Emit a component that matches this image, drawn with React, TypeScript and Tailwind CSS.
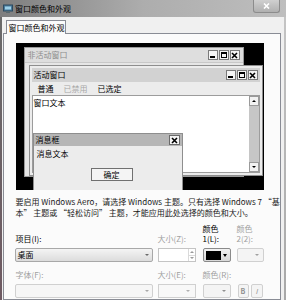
import React from "react";

const F = { fontFamily: '"Noto Sans CJK SC", "Noto Sans", sans-serif' };

function Caps() {
  const b =
    "w-[10px] h-[10px] bg-[#f4f4f4] border border-[#7a7a7a] flex items-center justify-center";
  return (
    <div className="flex gap-[1px]">
      <div className={b}>
        <div className="w-[5px] h-[2px] bg-black mt-[4px]" />
      </div>
      <div className={b}>
        <div className="w-[6px] h-[6px] border border-black border-t-2" />
      </div>
      <div className={b}>
        <svg width="7" height="7" viewBox="0 0 7 7">
          <path d="M1 1L6 6M6 1L1 6" stroke="black" strokeWidth="1.6" />
        </svg>
      </div>
    </div>
  );
}

export default function App() {
  return (
    <div
      className="w-[286px] h-[300px] overflow-hidden flex flex-col bg-[#bdbdbd] text-[8px] leading-[10px] text-black"
      style={F}
    >
      {/* title bar */}
      <div className="h-[17px] relative flex items-center bg-gradient-to-r from-[#7e7e7e] via-[#adadad] to-[#bebebe]">
        <div className="ml-[3px] w-[10px] h-[10px] flex items-center justify-center">
          <svg width="10" height="10" viewBox="0 0 10 10">
            <rect x="0.5" y="1" width="9" height="6" fill="#4a7a9a" stroke="#2c4a60" />
            <rect x="2" y="2.5" width="6" height="3" fill="#9cd0e8" />
            <rect x="3" y="7" width="4" height="2" fill="#5a6a70" />
          </svg>
        </div>
        <span className="ml-[2px] text-[8px] text-black whitespace-nowrap">窗口颜色和外观</span>
        <div className="absolute right-[6px] top-0 w-[27px] h-[13px] rounded-b-[3px] border border-t-0 border-[#8c8c8c] bg-gradient-to-b from-[#d0d0d0] to-[#b0b0b0] flex items-center justify-center">
          <svg width="7" height="6" viewBox="0 0 7 6">
            <path d="M1 0.5L6 5.5M6 0.5L1 5.5" stroke="#ffffff" strokeWidth="1.6" />
          </svg>
        </div>
      </div>

      {/* body */}
      <div className="flex-1 flex">
        <div className="w-[4px] bg-gradient-to-b from-[#6a6a6a] to-[#6e5a62]" />
        <div className="flex-1 bg-[#f0f0f0] flex flex-col pt-[3px] pl-[1px] pr-[3px]">
          {/* tab strip */}
          <div className="h-[13px] flex items-end pl-[3px]">
            <div className="h-[14px] w-[60px] bg-[#fbfbfb] border border-b-0 border-[#898c95] flex items-center pl-[2px] relative top-[1px] whitespace-nowrap">
              窗口颜色和外观
            </div>
          </div>
          {/* panel */}
          <div className="flex-1 bg-[#fbfbfb] border border-[#898c95] pt-[9px]">
            {/* preview */}
            <div className="ml-[12px] w-[248px] h-[147px] bg-black relative overflow-hidden">
              {/* inactive window */}
              <div className="absolute left-[8px] top-[4px] w-[220px] h-[130px] bg-[#e6e6e6] border border-[#9a9a9a]">
                <div className="h-[15px] bg-[#dedede] flex items-center justify-between pl-[3px] pr-[3px] border-b border-[#c8c8c8]">
                  <span className="text-[#8c8c8c]">非活动窗口</span>
                  <Caps />
                </div>
              </div>
              {/* active window */}
              <div className="absolute left-[13px] top-[22px] w-[234px] h-[111px] bg-[#ececec] border border-[#8e8e8e] p-[2px] flex flex-col">
                <div className="h-[14px] bg-[#d2d2d2] flex items-center justify-between pl-[2px] pr-[2px]">
                  <span>活动窗口</span>
                  <Caps />
                </div>
                <div className="h-[13px] flex items-center gap-[10px] pl-[6px]">
                  <span>普通</span>
                  <span className="text-[#a8a8a8]">已禁用</span>
                  <span>已选定</span>
                </div>
                <div className="flex-1 bg-white border border-[#9c9c9c] flex">
                  <div className="flex-1 pl-[1px] pt-[2px]">窗口文本</div>
                  <div className="w-[10px] bg-[#c6c6c6] flex flex-col justify-between">
                    <div className="h-[10px] bg-[#f2f2f2] border border-[#9a9a9a] flex items-center justify-center">
                      <div className="w-0 h-0 border-l-[2px] border-r-[2px] border-b-[2px] border-l-transparent border-r-transparent border-b-black" />
                    </div>
                    <div className="h-[10px] bg-[#f2f2f2] border border-[#9a9a9a] flex items-center justify-center">
                      <div className="w-0 h-0 border-l-[2px] border-r-[2px] border-t-[2px] border-l-transparent border-r-transparent border-t-black" />
                    </div>
                  </div>
                </div>
              </div>
              {/* message box */}
              <div className="absolute left-[17px] top-[90px] w-[150px] h-[58px] bg-[#ececec] border border-[#8e8e8e] flex flex-col">
                <div className="h-[12px] bg-[#b6b6b6] flex items-center justify-between pl-[2px] pr-[2px]">
                  <span>消息框</span>
                  <div className="w-[11px] h-[10px] bg-[#f4f4f4] border border-[#6a6a6a] flex items-center justify-center">
                    <svg width="7" height="7" viewBox="0 0 7 7">
                      <path d="M1 1L6 6M6 1L1 6" stroke="black" strokeWidth="1.6" />
                    </svg>
                  </div>
                </div>
                <div className="pl-[3px] pt-[3px]">消息文本</div>
                <div className="flex justify-center mt-[9px] pl-[8px]">
                  <div className="w-[42px] h-[13px] bg-[#f4f4f4] border border-[#707070] flex items-center justify-center">
                    确定
                  </div>
                </div>
              </div>
            </div>

            {/* description */}
            <div className="ml-[12px] mt-[6px] leading-[11px] whitespace-nowrap text-[#1a1a1a]">
              要启用 Windows Aero，请选择 Windows 主题。只有选择 Windows 7 “基
              <br />
              本” 主题或 “轻松访问” 主题，才能应用此处选择的颜色和大小。
            </div>

            {/* row 1 */}
            <div className="ml-[11px] mt-[6px] flex items-end">
              <div className="w-[138px] pl-[1px]">项目(I):</div>
              <div className="w-[38px] ml-[5px] text-[#a0a0a0]">大小(Z):</div>
              <div className="w-[28px] ml-[7px] flex flex-col">
                <span>颜色</span>
                <span>1(L):</span>
              </div>
              <div className="w-[27px] ml-[6px] flex flex-col text-[#a0a0a0]">
                <span>颜色</span>
                <span>2(2):</span>
              </div>
            </div>
            <div className="ml-[11px] mt-[4px] flex h-[14px]">
              <div className="w-[138px] border border-[#a8a8a8] rounded-[2px] bg-gradient-to-b from-[#f4f4f4] to-[#dcdcdc] flex items-center justify-between pl-[2px] pr-[3px]">
                <span>桌面</span>
                <div className="w-0 h-0 border-l-[2px] border-r-[2px] border-t-[2px] border-l-transparent border-r-transparent border-t-[#6a6a6a]" />
              </div>
              <div className="w-[38px] ml-[5px] border border-[#c4c4c4] bg-white flex justify-end">
                <div className="w-[7px] flex flex-col border-l border-[#dadada]">
                  <div className="flex-1 flex items-center justify-center">
                    <div className="w-0 h-0 border-l-[2px] border-r-[2px] border-b-[2px] border-l-transparent border-r-transparent border-b-[#9a9a9a]" />
                  </div>
                  <div className="flex-1 flex items-center justify-center border-t border-[#dadada]">
                    <div className="w-0 h-0 border-l-[2px] border-r-[2px] border-t-[2px] border-l-transparent border-r-transparent border-t-[#9a9a9a]" />
                  </div>
                </div>
              </div>
              <div className="w-[28px] ml-[7px] border border-[#8a8a8a] rounded-[2px] bg-gradient-to-b from-[#f2f2f2] to-[#d8d8d8] flex items-center px-[2px]">
                <div className="w-[15px] h-[9px] bg-black" />
                <div className="ml-[2px] w-0 h-0 border-l-[2px] border-r-[2px] border-t-[3px] border-l-transparent border-r-transparent border-t-black" />
              </div>
              <div className="w-[27px] ml-[6px] border border-[#d0d0d0] rounded-[2px] bg-[#f4f4f4] flex items-center justify-end pr-[4px]">
                <div className="w-0 h-0 border-l-[2px] border-r-[2px] border-t-[2px] border-l-transparent border-r-transparent border-t-[#a0a0a0]" />
              </div>
            </div>

            {/* row 2 */}
            <div className="ml-[11px] mt-[8px] flex text-[#a0a0a0]">
              <div className="w-[138px] pl-[1px]">字体(F):</div>
              <div className="w-[38px] ml-[5px]">大小(E):</div>
              <div className="w-[40px] ml-[7px]">颜色(R):</div>
            </div>
            <div className="ml-[11px] mt-[4px] flex h-[14px]">
              <div className="w-[138px] border border-[#d0d0d0] rounded-[2px] bg-[#f6f6f6] flex items-center justify-end pr-[3px]">
                <div className="w-0 h-0 border-l-[2px] border-r-[2px] border-t-[2px] border-l-transparent border-r-transparent border-t-[#a8a8a8]" />
              </div>
              <div className="w-[38px] ml-[5px] border border-[#d0d0d0] bg-[#f8f8f8] flex items-center justify-end pr-[5px]">
                <div className="w-0 h-0 border-l-[2px] border-r-[2px] border-t-[2px] border-l-transparent border-r-transparent border-t-[#b0b0b0]" />
              </div>
              <div className="w-[28px] ml-[7px] border border-[#d0d0d0] rounded-[2px] bg-[#f4f4f4] flex items-center justify-end pr-[4px]">
                <div className="w-0 h-0 border-l-[2px] border-r-[2px] border-t-[2px] border-l-transparent border-r-transparent border-t-[#909090]" />
              </div>
              <div className="w-[11px] ml-[7px] border border-[#d0d0d0] rounded-[2px] bg-[#f4f4f4] flex items-center justify-center text-[#909090] font-bold text-[7px]">
                B
              </div>
              <div className="w-[12px] ml-[2px] border border-[#d0d0d0] rounded-[2px] bg-[#f4f4f4] flex items-center justify-center text-[#909090] italic text-[7px]">
                I
              </div>
            </div>
          </div>
        </div>
        <div className="w-[6px] bg-gradient-to-b from-[#c4c4c4] to-[#a8a8a8]" />
      </div>
    </div>
  );
}
